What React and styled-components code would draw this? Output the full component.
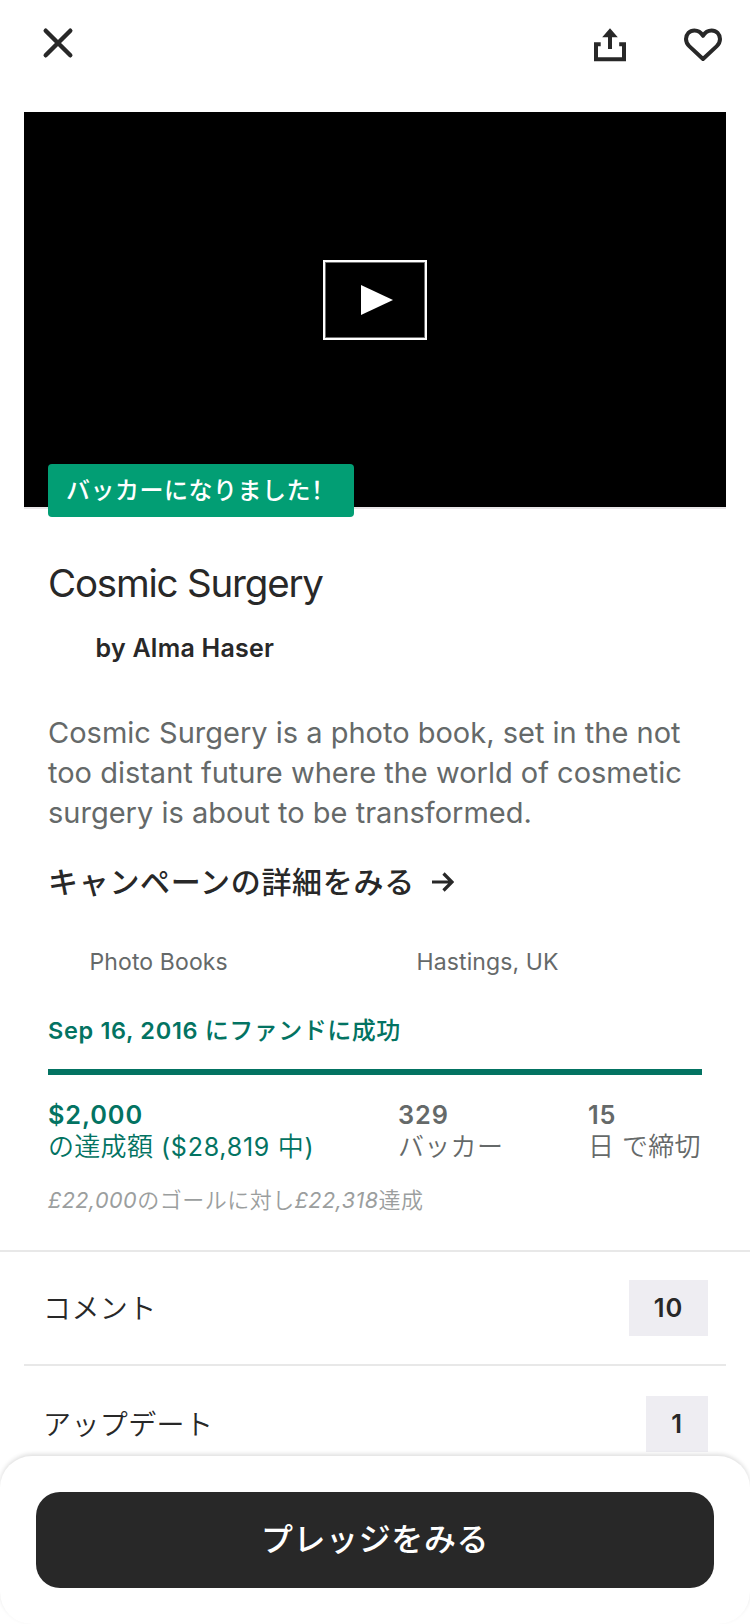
import React from "react";
import styled, { createGlobalStyle } from "styled-components";

const GlobalStyle = createGlobalStyle`
  * { box-sizing: border-box; }
  body {
    margin: 0;
    background: #fff;
    color: #282828;
    font-family: Inter, "Noto Sans CJK JP", sans-serif;
    white-space: nowrap;
    overflow: hidden;
  }
`;

const Screen = styled.div`
  width: 750px;
  height: 1624px;
  display: flex;
  flex-direction: column;
  overflow: hidden;
`;

const Header = styled.header`
  flex: none;
  height: 112px;
  display: flex;
  align-items: flex-start;
  padding: 23px 27px 0 38px;
`;

const IconButton = styled.button`
  border: 0;
  padding: 0;
  background: none;
  width: 40px;
  height: 40px;
  color: #282828;
  margin-left: ${(p) => p.$gap || 0};
  svg { display: block; }
`;

const Video = styled.section`
  flex: none;
  position: relative;
  height: 397px;
  margin: 0 24px;
  background: #000;
  border-bottom: 2px solid #e8e6e8;
  display: flex;
  justify-content: center;
  padding-top: 148px;
`;

const PlayButton = styled.button`
  width: 104px;
  height: 80px;
  padding: 0;
  display: flex;
  align-items: center;
  justify-content: center;
  background: none;
  border: 2px solid #fff;
  box-shadow: inset 0 0 0 1px #6e6e6e;
  svg { margin-left: 4px; }
`;

const BackerBadge = styled.div`
  position: absolute;
  left: 24px;
  bottom: -10px;
  height: 53px;
  padding: 0 18px;
  border-radius: 4px;
  background: #029e74;
  color: #fff;
  font-size: 24px;
  font-weight: 500;
  letter-spacing: 0.5px;
  line-height: 53px;
`;

const Details = styled.section`
  flex: none;
  padding: 50px 48px 36px;
  border-bottom: 2px solid #e8e8e8;
`;

const Title = styled.h1`
  margin: 0;
  font-size: 38.5px;
  font-weight: 400;
  line-height: 48px;
  letter-spacing: -1.2px;
`;

const Creator = styled.div`
  margin: 25px 0 0 47.5px;
  font-size: 25px;
  font-weight: 600;
  line-height: 32px;
  letter-spacing: 0.25px;
`;

const Blurb = styled.p`
  margin: 49px 0 0;
  font-size: 29px;
  line-height: 40px;
  color: #656969;
`;

const CampaignLink = styled.a`
  display: flex;
  align-items: center;
  gap: 17px;
  margin-top: 29px;
  font-size: 30px;
  font-weight: 500;
  line-height: 40px;
  letter-spacing: 0.7px;
`;

const Meta = styled.div`
  display: flex;
  margin-top: 44px;
  font-size: 23px;
  line-height: 32px;
  letter-spacing: 0.12px;
  color: #656969;
`;

const MetaItem = styled.span`
  width: 327px;
  padding-left: 41.5px;
`;

const FundedNote = styled.div`
  margin-top: 37px;
  font-size: 23.5px;
  font-weight: 600;
  line-height: 32px;
  letter-spacing: 0.68px;
  color: #037362;
`;

const Jp = styled.span`
  font-size: ${(p) => p.$size};
  font-weight: ${(p) => p.$weight || "inherit"};
  font-style: normal;
  letter-spacing: ${(p) => p.$spacing || "0.5px"};
`;

const Progress = styled.div`
  height: 6px;
  margin-top: 22px;
  background: #037362;
`;

const Stats = styled.div`
  display: grid;
  grid-template-columns: 350px 190px 1fr;
  margin-top: 24px;
`;

const Stat = styled.div`
  font-size: 25px;
  line-height: 32px;
  letter-spacing: 0.75px;
  color: ${(p) => (p.$funded ? "#037362" : "#656969")};
  strong { display: block; font-size: 25.3px; font-weight: 600; letter-spacing: 0.9px; }
`;

const Conversion = styled.div`
  margin-top: 23px;
  font-size: 21.6px;
  font-style: italic;
  line-height: 28px;
  letter-spacing: 0.45px;
  color: #9b9e9e;
`;

const Row = styled.div`
  flex: none;
  display: flex;
  align-items: center;
  justify-content: space-between;
  height: ${(p) => p.$height};
  margin: 0 24px;
  padding: 0 18px 0 19px;
  border-bottom: 2px solid #e8e8e8;
`;

const RowLabel = styled.span`
  padding-bottom: 3px;
  font-size: 28px;
  font-weight: 350;
  letter-spacing: 0.4px;
`;

const Count = styled.span`
  min-width: ${(p) => p.$width};
  height: 56px;
  background: #eeedf2;
  font-size: 25.5px;
  font-weight: 600;
  line-height: 56px;
  letter-spacing: 0.9px;
  text-align: center;
`;

const Sheet = styled.footer`
  position: fixed;
  left: 0;
  top: 1456px;
  width: 750px;
  height: 168px;
  padding: 36px;
  border-radius: 32px;
  background: #fff;
  box-shadow: 0 -2px 4px rgba(0, 0, 0, 0.13);
`;

const PledgeButton = styled.button`
  width: 100%;
  height: 96px;
  border: 0;
  padding: 0 0 7px;
  border-radius: 24px;
  background: #282828;
  color: #fff;
  font-family: inherit;
  font-size: 32px;
  font-weight: 500;
  letter-spacing: 0.6px;
`;

const CloseIcon = () => (
  <svg width="40" height="40" viewBox="0 0 40 40" fill="none" stroke="currentColor" strokeWidth="4.4" strokeLinecap="round">
    <path d="M7.7 7.7 32.3 32.3M32.3 7.7 7.7 32.3" />
  </svg>
);

const ShareIcon = () => (
  <svg width="40" height="40" viewBox="0 0 40 40">
    <path d="M10.7 21.3H6V36.2H34V21.3H29.2" fill="none" stroke="currentColor" strokeWidth="4" />
    <path d="M20 5.3 27.8 14.2H22V26H18V14.2H12.2Z" fill="currentColor" />
  </svg>
);

const HeartIcon = () => (
  <svg width="40" height="40" viewBox="0 0 40 40" fill="none" stroke="currentColor" strokeWidth="4" strokeLinejoin="round">
    <path d="M20 36 6.2 23.1C4.2 21.2 3 18.8 3 16.1 3 11.2 6.6 7.4 11.4 7.4 15 7.4 18 9.4 20 12.8 22 9.4 25 7.4 28.6 7.4 33.4 7.4 37 11.2 37 16.1 37 18.8 35.8 21.2 33.8 23.1Z" />
  </svg>
);

const PlayIcon = () => (
  <svg width="32" height="30" viewBox="0 0 32 30">
    <path d="M0 0 32 15 0 30Z" fill="#fff" />
  </svg>
);

const ArrowIcon = () => (
  <svg width="22" height="20" viewBox="0 0 22 20" fill="none" stroke="currentColor" strokeWidth="3.2">
    <path d="M0 10H20M11.5 1.5 20 10 11.5 18.5" />
  </svg>
);

export default function App() {
  return (
    <Screen>
      <GlobalStyle />
      <Header>
        <IconButton aria-label="閉じる"><CloseIcon /></IconButton>
        <IconButton aria-label="シェア" $gap="auto"><ShareIcon /></IconButton>
        <IconButton aria-label="保存" $gap="53px"><HeartIcon /></IconButton>
      </Header>
      <Video>
        <PlayButton aria-label="再生"><PlayIcon /></PlayButton>
        <BackerBadge>バッカーになりました<span lang="zh-CN">！</span></BackerBadge>
      </Video>
      <Details>
        <Title>Cosmic Surgery</Title>
        <Creator>by Alma Haser</Creator>
        <Blurb>
          Cosmic Surgery is a photo book, set in the not<br />
          too distant future where the world of cosmetic<br />
          surgery is about to be transformed.
        </Blurb>
        <CampaignLink>キャンペーンの詳細をみる<ArrowIcon /></CampaignLink>
        <Meta>
          <MetaItem>Photo Books</MetaItem>
          <MetaItem>Hastings, UK</MetaItem>
        </Meta>
        <FundedNote>Sep 16, 2016 <Jp $size="24px" $weight="500">にファンドに成功</Jp></FundedNote>
        <Progress />
        <Stats>
          <Stat $funded>
            <strong>$2,000</strong>
            <Jp $size="26px" $weight="350" $spacing="0.3px">の達成額</Jp> ($28,819 <Jp $size="26px" $weight="350">中</Jp>)
          </Stat>
          <Stat>
            <strong>329</strong>
            <Jp $size="26px" $weight="350" $spacing="0.3px">バッカー</Jp>
          </Stat>
          <Stat>
            <strong>15</strong>
            <Jp $size="26px" $weight="350" $spacing="0.3px">日 で締切</Jp>
          </Stat>
        </Stats>
        <Conversion>
          £22,000<Jp $size="22px" $weight="350">のゴールに対し</Jp>£22,318<Jp $size="22px" $weight="350">達成</Jp>
        </Conversion>
      </Details>
      <Row $height="114px"><RowLabel>コメント</RowLabel><Count $width="79px">10</Count></Row>
      <Row $height="118px"><RowLabel>アップデート</RowLabel><Count $width="62px">1</Count></Row>
      <Sheet>
        <PledgeButton>プレッジをみる</PledgeButton>
      </Sheet>
    </Screen>
  );
}
